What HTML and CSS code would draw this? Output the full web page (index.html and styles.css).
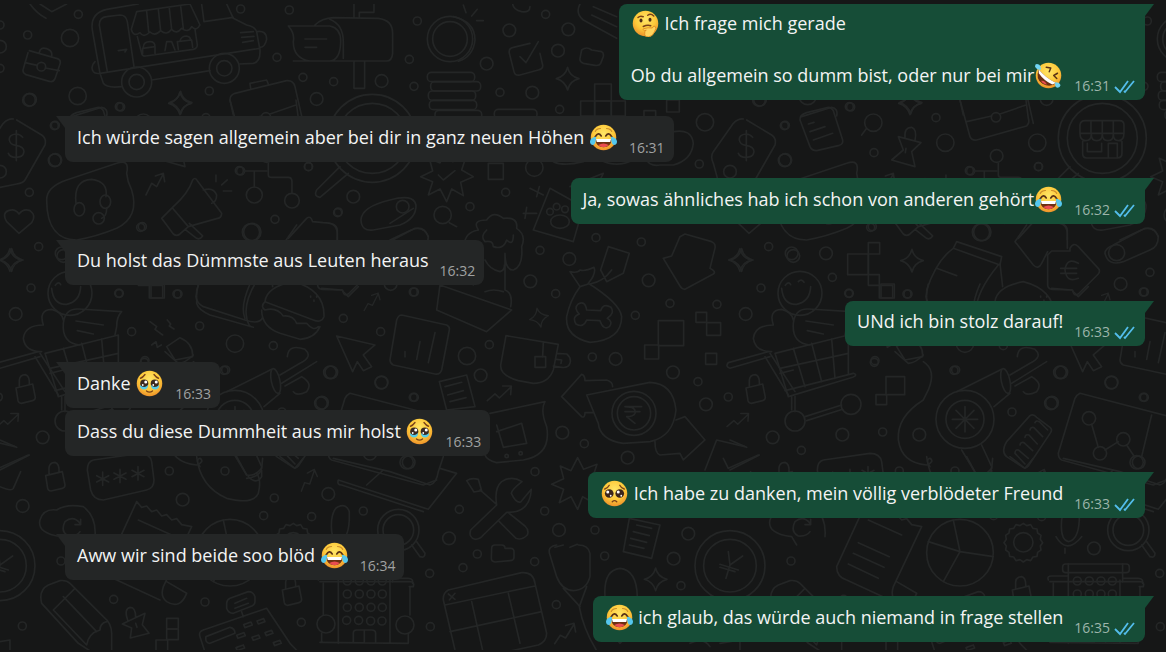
FILE: index.html
```html
<!DOCTYPE html>
<html lang="de">
<head>
<meta charset="utf-8">
<meta name="viewport" content="width=device-width, initial-scale=1">
<title>Chat</title>
<link rel="stylesheet" href="styles.css">
</head>
<body>
<svg class="sprites" aria-hidden="true">
  <defs>
    <radialGradient id="face" cx="50%" cy="35%" r="65%">
      <stop offset="0" stop-color="#ffe667"/><stop offset=".6" stop-color="#fdc93a"/><stop offset="1" stop-color="#ee922a"/>
    </radialGradient>
    <symbol id="e-joy" viewBox="0 0 36 36">
      <circle cx="18" cy="18" r="17" fill="url(#face)"/>
      <path d="M7 10Q9 6 14 6M22 6Q27 6 29 10" fill="none" stroke="#c98a2a" stroke-width="1.4" stroke-linecap="round"/>
      <path d="M7 17Q11 10 15 16M21 16Q25 10 29 17" fill="none" stroke="#5a3216" stroke-width="2.2" stroke-linecap="round"/>
      <path d="M7 20H29Q28 31 18 31T7 20Z" fill="#6d3012"/>
      <path d="M8 20H28L27 24H9Z" fill="#fff"/>
      <path d="M11 28Q18 24 25 28Q22 31 18 31T11 28Z" fill="#ea4d50"/>
      <path d="M8 17Q1 18 0 23Q0 28 4 28Q8 27 8 17ZM28 17Q35 18 36 23Q36 28 32 28Q28 27 28 17Z" fill="#55c7ee"/>
    </symbol>
    <symbol id="e-rofl" viewBox="0 0 36 36">
      <circle cx="18" cy="18" r="17" fill="url(#face)"/>
      <path d="M15 7L21 8L19 13M30 15L25 18L29 22" fill="none" stroke="#5a3216" stroke-width="2" stroke-linecap="round" stroke-linejoin="round"/>
      <path d="M5 10Q14 21 28 28Q20 35 10 29T5 10Z" fill="#6d3012"/>
      <path d="M5 10Q14 21 28 28L23 30Q12 25 5 15Z" fill="#fff"/>
      <path d="M8 25Q13 24 16 30Q11 30 8 25Z" fill="#ea4d50"/>
      <path d="M0 6Q0 2 4 3Q8 4 8 10Q2 11 0 6ZM27 27Q33 27 34 31Q33 35 29 34Q26 33 27 27Z" fill="#71d4f2"/>
    </symbol>
    <symbol id="e-think" viewBox="0 0 36 36">
      <circle cx="18" cy="18" r="17" fill="url(#face)"/>
      <path d="M8 10Q11 7 15 9M21 7Q25 4 29 8M15 22Q21 19 25 21" fill="none" stroke="#7a4219" stroke-width="2" stroke-linecap="round"/>
      <ellipse cx="12" cy="14" rx="2" ry="2.6" fill="#4c2c16"/><ellipse cx="24" cy="13" rx="2" ry="2.6" fill="#4c2c16"/>
      <path d="M15 25Q22 23 27 24Q29 20 31 22Q33 24 30 29Q28 35 22 36Q16 36 17 31Q16 28 19 27Q14 28 15 25Z" fill="#ffd45d" stroke="#e08c21" stroke-width="1.2"/>
    </symbol>
    <symbol id="e-tears" viewBox="0 0 36 36">
      <circle cx="18" cy="18" r="17" fill="url(#face)"/>
      <path d="M6 11Q9 10 12 6M24 6Q27 10 30 11M14 28Q18 31 22 28" fill="none" stroke="#7a4219" stroke-width="1.8" stroke-linecap="round"/>
      <circle cx="11" cy="18" r="5.4" fill="#3b2a21"/><circle cx="25" cy="18" r="5.4" fill="#3b2a21"/>
      <path d="M5 20Q11 25 16 20Q16 26 10 26Q5 25 5 20ZM31 20Q25 25 20 20Q20 26 26 26Q31 25 31 20Z" fill="#54cbe9"/>
      <circle cx="13" cy="16" r="2" fill="#fff"/><circle cx="27" cy="16" r="2" fill="#fff"/><circle cx="9" cy="20" r="1.2" fill="#fff"/><circle cx="23" cy="20" r="1.2" fill="#fff"/>
    </symbol>
    <symbol id="e-plead" viewBox="0 0 36 36">
      <circle cx="18" cy="18" r="17" fill="url(#face)"/>
      <path d="M5 12Q9 11 11 7M25 7Q27 11 31 12M15 29Q18 26 21 29" fill="none" stroke="#7a4219" stroke-width="1.8" stroke-linecap="round"/>
      <circle cx="11" cy="18" r="5.8" fill="#3b251b"/><circle cx="25" cy="18" r="5.8" fill="#3b251b"/>
      <circle cx="9" cy="16" r="2" fill="#fff"/><circle cx="23" cy="16" r="2" fill="#fff"/><circle cx="13" cy="21" r="1.2" fill="#fff"/><circle cx="27" cy="21" r="1.2" fill="#fff"/>
    </symbol>
    <symbol id="ticks" viewBox="0 0 22 15">
      <path d="M1 8L6 13L14 2M10 12L11 13L20 2" fill="none" stroke="#53bdeb" stroke-width="1.8"/>
    </symbol>
  </defs>
</svg>

<svg class="wallpaper" aria-hidden="true">
  <defs>
    <marker id="r12" markerUnits="userSpaceOnUse" markerWidth="40" markerHeight="40" viewBox="-20 -20 40 40"><circle class="ring" r="12"/></marker>
    <marker id="r19" markerUnits="userSpaceOnUse" markerWidth="60" markerHeight="60" viewBox="-30 -30 60 60"><circle class="ring" r="19"/></marker>
    <marker id="r26" markerUnits="userSpaceOnUse" markerWidth="70" markerHeight="70" viewBox="-35 -35 70 70"><circle class="ring" r="26"/></marker>
    <path id="spark" d="M0-34Q5-8 34 0Q6 7 0 34Q-7 8-34 0Q-7-7 0-34Z"/>
    <path id="lock" d="M-28-8L22-20L30 20Q30 28 22 30L-12 38Q-20 38-22 30ZM-18-12V-32Q-16-48 0-48Q14-44 12-18"/>
    <path id="zig" d="M-38 22L-15 2L-2 14L34-20M8-22L34-22L32 4"/>
    <path id="burst" d="M0-75L18-40L58-55L45-15L80 5L42 22L50 62L15 42L0 80L-20 42L-55 60L-42 20L-78 5L-42-12L-52-50L-20-36Z"/>
    <path id="pin" d="M-38 10L30-22L22 12L42 38L-14 52L-10 22ZM-22-2Q-34-36-14-40Q2-40 2-10M2 8L6 20"/>
    <g id="doodles">
      <g transform="scale(.3333)">
        <path class="dots-s" d="M235 43 83 105 362 321 628 273 722 27 868 30 831 172 909 232 1001 245 88 577 926 500 1015 636 166 376 0 75 0 205 722 513"/>
        <path class="dots-m" d="M90 299 950 297 1145 243 166 480 1060 590 0 140 0 515"/>
        <path class="dots-l" d="M210 114 233 288"/>
        <use href="#spark" x="542" y="308"/>
        <path d="M90 12Q110 40 138 55M120 12Q140 25 155 35L200 12M88 152L172 176Q184 180 180 192L165 236Q160 248 148 244L78 224Q66 218 70 206L84 158M118 158Q120 140 140 146Q158 152 155 168M75 188L112 196M136 204L178 212"/>
        <circle cx="124" cy="200" r="13"/>
        <path d="M300 220L277 90Q270 40 320 28L415 12M300 220L310 250Q320 265 365 260M455 240L630 212M718 192L760 190Q782 185 780 150L770 95Q765 80 740 75L700 55L680 12M300 220L780 145M322 215L298 75Q298 52 320 50L360 45Q378 45 382 65L402 200M355 152L380 148L375 156M410 35L570 12L600 75Q590 95 575 80Q565 100 545 85Q530 105 515 88Q500 108 482 92Q465 110 450 96Q430 115 420 98Q400 112 394 88ZM440 34L446 95M475 28L482 92M508 24L515 88M542 18L550 85M412 110L425 160Q427 170 437 168L580 148Q592 145 592 135L585 88M428 160V145L465 140V160M430 142Q430 125 450 125Q465 125 465 140M495 152L500 125L515 125L525 150M535 148L532 125L575 120L578 142M540 122Q545 108 560 108Q570 110 572 118M605 12L612 65L700 52M770 95Q800 90 800 118Q795 142 780 142M722 98L760 95M725 112L762 109M728 127L760 122M285 185Q270 200 280 215Q285 222 300 220"/>
        <circle cx="410" cy="246" r="45"/><circle cx="410" cy="246" r="23"/><circle cx="673" cy="205" r="45"/><circle cx="673" cy="205" r="23"/>
        <path d="M865 78L990 78Q1025 85 1022 130Q1020 180 990 183L930 183Q880 175 880 125Q885 100 865 78M945 75Q965 55 1000 53L1135 55Q1178 60 1178 100V160Q1176 183 1160 183H880M990 58Q1030 75 1030 125V175M915 117H980M915 142H950M1062 12V52M1078 50V37H1122V12M1062 185V265H1094V185"/>
        <path d="M700 345L690 300Q690 285 705 280L860 242Q880 240 885 260L910 370M752 265L750 250L800 240L805 252M215 350L305 322Q325 325 320 348"/>
        <path d="M40 357Q25 355 10 370L-50 455Q-60 470-50 490L-35 545Q-30 562 0 562L50 552Q70 550 75 540L135 435Q140 415 125 405L50 360M68 412Q60 402 48 402Q26 404 28 420Q30 434 48 436Q72 440 72 455Q70 472 48 472Q30 472 25 460M49 392V482"/>
        <path d="M140 600Q140 560 200 540L350 490Q390 475 380 520Q382 545 395 570Q420 650 350 685Q290 710 230 720C180 720 140 690 140 600ZM228 610Q220 540 275 538Q325 545 318 590M320 625Q320 650 305 655"/>
        <ellipse cx="238" cy="628" rx="16" ry="20"/><ellipse cx="316" cy="605" rx="16" ry="20"/><ellipse cx="296" cy="655" rx="17" ry="17"/>
        <path d="M438 585L455 550L470 560L490 522M466 528L490 520L494 545M485 655L520 620Q565 580 578 540Q585 530 592 542L665 640Q665 655 650 656L565 680L540 702Q530 710 520 702L485 655M518 625L565 680M555 688L590 715Q600 720 608 708L568 670M610 570Q640 560 650 585Q650 605 635 610M648 525V545M665 555L682 540M670 573H695"/>
        <path d="M736 513H800M805 490V525Q805 532 815 532H865Q876 532 876 545V580M763 515V560"/>
        <circle cx="763" cy="585" r="24"/><circle cx="876" cy="602" r="22"/>
        <circle cx="1117" cy="415" r="132"/><circle cx="1117" cy="415" r="105"/>
        <path d="M1020 500L950 570Q940 590 960 592L1045 520M1170 600Q1085 620 1083 660Q1085 695 1120 690L1200 675Q1250 655 1248 615Q1240 580 1170 600"/>
        <path d="M57 700L20 665Q5 640 25 632Q45 624 57 642Q70 624 90 632Q110 647 95 668Z"/>
      </g>
      <g transform="translate(390 0) scale(.3333)">
        <path class="dots-s" d="M82 63 58 178 72 259 467 43 330 277 509 328 347 577 240 620 928 492"/>
        <path class="dots-m" d="M290 191 358 91 535 88 504 152 427 278 1107 300 38 620"/>
        <path class="dots-l" d="M433 503 158 645 945 367"/>
        <circle cx="180" cy="117" r="68"/><circle cx="180" cy="117" r="52"/>
        <path d="M190 50Q255 65 255 120Q250 170 205 184M220 15L228 38M262 28L245 48M280 62H260M368 12Q370 30 395 35Q420 38 420 20M420 130L370 142Q355 145 358 160L372 215Q375 228 390 225L445 210Q460 207 458 195L450 160M390 170L408 188L445 125M575 150Q590 138 605 150L635 155Q642 158 640 170L632 190Q628 198 615 196L580 190Q568 185 570 175ZM570 12Q555 40 580 60L680 115M610 20L680 50M605 45L680 80"/>
        <rect x="112" y="217" width="142" height="28" rx="12"/><rect x="122" y="245" width="150" height="28" rx="12"/><rect x="115" y="273" width="142" height="28" rx="12"/><rect x="118" y="301" width="142" height="28" rx="12"/><rect x="135" y="331" width="140" height="28" rx="12"/><rect x="313" y="328" width="128" height="28" rx="12"/>
        <rect x="614" y="252" width="50" height="51"/><rect x="572" y="303" width="42" height="45"/><rect x="614" y="303" width="50" height="45"/><rect x="664" y="303" width="42" height="45"/><rect x="830" y="300" width="38" height="36"/><rect x="762" y="332" width="35" height="35"/><rect x="295" y="490" width="45" height="48"/>
        <use href="#spark" x="533" y="236"/><use href="#burst" x="170" y="525"/><path d="M145 525L160 540L195 512"/>
        <path d="M480 565L430 690L550 725L580 620ZM420 565L460 585M448 560L440 590M400 640L440 640M410 622L405 655"/>
        <ellipse cx="510" cy="665" rx="28" ry="20"/><circle cx="480" cy="635" r="10"/><circle cx="500" cy="620" r="10"/><circle cx="525" cy="628" r="10"/>
        <path d="M850 395Q905 385 910 430Q905 480 850 495H810Q780 500 770 480M490 485Q520 500 580 485M630 480Q680 505 730 480M540 560L640 520L620 560"/>
      </g>
      <g transform="translate(50 90) scale(.3333)">
        <path class="dots-s" d="M13 107 208 50 468 83 282 188 568 242 775 230 272 412 157 562 206 610 381 612 1110 547 1090 606"/>
        <path class="dots-m" d="M14 211 650 198 40 498 138 490 1022 582"/>
        <path class="dots-l" d="M280 98 496 158 772 158 603 427"/>
        <path d="M260 115L245 135M80 68L145 52Q155 52 160 62L188 150Q190 162 178 166L110 182Q95 182 90 170L60 90Q58 75 80 68M85 102L102 97M90 125L135 110M100 150L158 130M355 140L423 158L395 185L405 230L335 210L370 180ZM375 143Q372 112 395 112Q412 118 405 152M378 175L376 188"/>
        <use href="#spark" x="390" y="40"/><use href="#spark" x="396" y="512"/>
        <path d="M540 30L570 140Q575 152 590 150L740 108Q750 100 745 85L738 30M560 95L635 78M660 72L738 45"/><circle cx="648" cy="82" r="14"/>
        <path d="M900 130V105Q902 92 915 92H1018Q1032 92 1032 105V130ZM933 92V130M967 92V130M1000 92V130M900 130Q900 152 917 152Q934 152 934 132Q934 152 950 152Q967 152 967 132Q967 152 984 152Q1000 152 1000 132Q1000 152 1016 152Q1032 152 1032 130M908 155V190Q908 204 920 204H1012Q1026 204 1026 190V155M922 160V185H965V160M985 204V160H1012V204"/>
        <rect x="203" y="492" width="62" height="62"/><rect x="265" y="458" width="34" height="34"/><path d="M265 554V586H298V554ZM265 492V554H298"/><rect x="298" y="586" width="40" height="38"/>
        <path d="M530 455L665 500L660 525L520 475ZM520 475Q470 510 440 600L440 640Q445 660 480 675L610 712M470 535L530 557M655 525Q560 640 600 710M660 520L668 590M740 405L705 455L760 525Q775 540 785 520L803 485M850 405Q860 410 862 430V475M815 483H870V475Q880 455 895 470L955 535Q962 542 955 552L895 612Q880 620 878 600L815 598Q803 595 803 585V495ZM895 520Q860 500 855 540Q860 580 895 565M842 535H890M842 550H890M1000 465L1085 420Q1120 405 1135 440Q1135 470 1110 480L1030 515Q985 530 975 490Q975 475 1000 465"/><circle cx="1010" cy="488" r="24"/>
      </g>
      <g transform="translate(0 210) scale(.3333)">
        <path class="dots-s" d="M427 50 116 110 93 234 825 28 1013 8 358 250 534 252 599 348 395 365 820 407 1030 325 1142 365 677 480 435 452"/>
        <path class="dots-m" d="M47 312 994 487 1145 517 966 578 185 130"/>
        <path class="dots-l" d="M757 66 705 401"/>
        <use href="#spark" x="35" y="150"/><circle cx="210" cy="250" r="66"/>
        <path d="M155 235Q160 285 200 283Q240 275 242 230M166 226Q176 212 182 224M205 215Q214 205 222 217"/>
        <rect x="453" y="222" width="40" height="42"/>
        <path d="M795 275Q800 230 880 215Q975 240 972 320Q965 340 940 330ZM795 275Q780 290 795 300Q830 290 850 318Q880 315 890 340L920 340Q940 365 955 350M785 300Q785 350 840 370L900 388Q945 385 960 350M932 258V262M942 270V274M950 258V262M595 222L588 260Q590 280 610 290L735 330Q780 345 788 322M750 222Q720 290 735 325M965 235L1025 240L1045 260L1075 230"/>
        <use href="#zig" transform="translate(1115 275) rotate(-20) scale(.8)"/>
        <path d="M130 345Q115 300 155 298Q185 305 190 330M130 345Q75 345 70 385Q75 425 125 425M190 340Q195 295 235 297L365 305Q350 320 350 350L345 375M190 340Q185 400 240 405M228 333L310 345M232 362L280 372M105 440L175 555M120 430L195 545M150 490L190 480"/>
        <path d="M450 335L470 350L465 358L488 375M502 330L512 342L508 348L522 357M455 405L468 395L472 412L484 405M500 410L540 383Q580 400 578 440L525 450ZM1010 378L1125 405L1090 435L1115 470L1090 482L1072 455L1058 485Z"/>
        <use href="#lock" x="76" y="542"/><use href="#zig" transform="translate(25 630) scale(.9)"/>
        <path d="M865 85L920 25Q932 15 938 35L970 38Q1010 38 1012 60V90"/>
      </g>
      <g transform="translate(50 240) scale(.3333)">
        <path class="dots-s" d="M283 367 522 391 696 516 1090 472 308 576 64 631"/>
        <path class="dots-m" d="M840 397 994 428 813 490 187 584 418 584"/>
        <path d="M-15 340L205 285V400M-15 340L25 470L218 412Q235 405 220 400L15 452M40 325L75 440M95 310L125 425M155 297L165 415M0 385L205 340M35 470V510M45 470V515M75 530L185 495M80 542L188 508"/><circle cx="45" cy="543" r="30"/><circle cx="213" cy="493" r="30"/>
        <rect x="318" y="410" width="56" height="54"/><rect x="288" y="464" width="32" height="30"/>
        <path d="M345 335L385 370Q405 370 430 345M430 365Q470 390 445 450L430 480Q350 530 355 600Q365 670 440 675Q465 665 450 655Q435 660 450 680"/>
        <circle cx="555" cy="538" r="87"/><circle cx="555" cy="538" r="57"/><ellipse cx="677" cy="423" rx="13" ry="38" transform="rotate(-12 677 423)"/>
        <path d="M530 455L665 388M642 500L690 460M545 630L590 705M605 615L635 680Q635 710 590 715M690 405L750 370Q790 350 765 328Q715 310 712 350M695 430L800 365M705 438L755 410Q790 430 770 455Q740 470 730 455M555 500V576M517 538H593M528 511L582 565M582 511L528 565"/>
        <path d="M750 527Q760 520 770 532L810 562Q818 568 812 578L745 678Q736 688 726 680L680 650Q662 635 680 605ZM705 640L735 672M705 640Q705 628 715 630L745 655M720 615Q722 605 732 608L758 632M735 592Q737 582 747 585L772 612M750 570Q752 560 762 563L788 590M765 548Q768 540 778 545L803 570"/>
        <path d="M900 460L1210 540M900 460Q890 465 885 475L835 640Q835 655 845 660L1120 735L1160 720M1115 525L1085 650M935 553L955 622M975 630L1015 605M1040 615L1062 648"/><circle cx="927" cy="535" r="20"/><circle cx="960" cy="640" r="20"/><circle cx="1030" cy="598" r="20"/><circle cx="1070" cy="667" r="20"/>
      </g>
      <g transform="translate(390 210) scale(.3333)">
        <path class="dots-s" d="M450 121 497 251 618 83 754 96 840 280 736 316 981 283 73 246 298 404 73 562 607 441 924 515 1015 561"/>
        <path class="dots-m" d="M538 147 421 214 776 211 272 496 677 447 849 487 948 583"/>
        <path class="dots-l" d="M231 438"/>
        <path d="M178 38L200 50M265 60Q245 30 290 30Q310 0 340 25Q385 20 380 55Q410 75 395 110Q400 170 370 180Q345 180 345 130M265 60Q215 70 225 120L250 225M345 130V240Q370 250 362 290M290 60Q270 80 285 95Q310 90 310 110Q340 120 350 90Q370 110 370 75M285 150Q300 180 330 185Q345 180 343 165M285 245Q310 235 340 245M150 225L140 300L290 365L365 300ZM0 40L70 -5M0 90L75 55Q105 50 115 80"/>
        <path d="M35 315L170 345Q180 350 178 360L155 480Q150 495 135 492L10 465Q0 460 0 450L20 330Q25 315 35 315M45 425V440M90 395L80 448M135 368L115 458M348 377L505 403L490 480Q475 520 430 520L385 512Q325 495 333 460ZM460 398L458 440M500 430L530 432Q545 445 540 460Q535 475 515 472L490 468M500 448L515 450L513 460M148 515L230 495L255 590L170 600ZM165 530L215 517M173 555L220 542M180 575L228 563"/><rect x="435" y="440" width="32" height="32"/>
        <path d="M570 230Q560 215 540 185Q565 190 570 180Q585 185 612 172Q620 190 595 220Q690 280 695 320Q695 390 600 397Q525 380 530 320Q540 270 570 230M570 230L595 222M655 110L718 130L700 190L650 215L632 180ZM600 222Q640 215 665 180M590 300Q585 270 565 282Q550 295 568 312Q545 320 558 342Q580 355 590 330L630 332Q640 362 658 350Q670 335 652 325Q675 310 663 292Q640 278 632 302Z"/>
        <path d="M885 72L965 95Q978 100 975 115L960 175Q980 185 970 192L885 238Q875 238 870 228L820 145L845 138L870 80Z"/>
        <use href="#spark" x="1050" y="150"/><use href="#spark" transform="translate(447 323) rotate(-12) scale(.85)"/>
        <rect x="805" y="332" width="76" height="75"/><rect x="764" y="405" width="42" height="42"/><rect x="918" y="307" width="32" height="30"/><rect x="950" y="338" width="42" height="38"/><rect x="947" y="430" width="33" height="33"/>
        <path d="M1135 425L1015 458Q1005 470 1020 475L1140 440"/>
        <circle cx="732" cy="610" r="66"/><circle cx="732" cy="610" r="50"/>
        <path d="M590 555L780 517Q850 520 858 600Q850 680 780 695L700 700Q630 690 625 640ZM705 590H755M705 605H750M705 590Q740 590 735 610Q730 620 710 620L735 640M575 493L515 560L575 620Q585 625 585 608H610M575 493Q585 495 585 512L650 510Q668 515 668 530M858 630L885 620L945 690L880 750L870 730L810 735Q795 730 795 695M300 610L465 575Q450 600 470 650Q485 735 400 750L320 758Q290 750 285 735M320 665L395 640L410 700L340 712L320 645"/>
        <circle cx="350" cy="738" r="5"/><circle cx="392" cy="730" r="5"/>
        <use href="#zig" x="330" y="550"/>
      </g>
      <g transform="translate(0 430) scale(.3333)">
        <path class="dots-s" d="M508 123 675 123 823 204 791 257 935 260 1090 243 341 508 615 516 904 577 67 588 183 393"/>
        <path class="dots-m" d="M128 22 68 228 548 209 985 192"/>
        <path d="M0 30L50 52M0 120L88 75M62 125L40 175Q35 185 0 170"/>
        <use href="#lock" x="165" y="145"/><use href="#lock" x="875" y="488"/><use href="#pin" x="405" y="572"/>
        <path d="M280 90L420 70Q450 70 455 95L462 150Q462 175 440 180L310 210Q280 210 272 180L262 120Q262 95 280 90M308 126V166M290 137L326 156M326 137L290 156M360 118V158M342 129L378 148M378 129L342 148M414 110V150M396 121L432 140M432 121L396 140"/>
        <path d="M590 80Q600 170 680 205Q760 225 775 190Q785 150 770 130M710 80L740 135Q765 140 785 115L788 85M745 140Q770 165 785 140L785 120M840 80L885 115L910 85"/>
        <use href="#zig" transform="translate(925 150) rotate(-28) scale(.9)"/>
        <path d="M1000 85L1170 125L1290 165Q1310 160 1315 125L1330 80M1015 150L1285 238L1370 130L1320 115M1015 150Q1010 165 1025 165L1270 245M1100 165L1150 120"/>
        <path d="M200 345L185 320Q110 310 120 270Q130 235 170 240Q200 220 250 230Q290 260 285 320M240 280Q220 255 195 275Q180 305 205 318Q230 320 240 305M242 268V284H225"/>
        <path d="M410 215L320 410Q320 440 350 450L480 510M410 215L425 232L440 228L455 245L470 240L485 258L500 254L515 270L530 266L545 284L575 290L490 470Q480 500 500 515Q540 540 560 490L500 455M415 270L515 315"/>
        <path d="M385 338L478 380M370 370L462 412M355 402L445 445"/>
        <path d="M125 520Q115 480 145 465L180 452Q200 450 210 460L310 560Q335 580 335 610V666M125 520L235 640L275 666M160 540L225 475M160 540L260 645Q265 610 300 600Q300 580 320 575M190 500L290 605"/>
        <rect x="500" y="565" width="35" height="32"/><rect x="500" y="597" width="35" height="32"/><rect x="468" y="630" width="35" height="36"/>
        <path d="M690 505L745 485Q760 485 765 500V515Q765 525 750 530L700 550Q685 550 680 535V520Q680 510 690 505M705 520L740 505M705 535L745 520M725 545L730 560M610 600L800 535L870 640L895 666M610 600Q595 605 600 620L615 666M618 620L690 592Q705 595 705 610L630 640Q615 640 618 620"/>
        <path d="M731 584l22-8l4 9l-22 8ZM771 573l20-7l4 9l-20 7ZM710 616l22-8l4 9l-22 8ZM756 622l20-7l4 9l-20 7ZM795 608l20-7l4 9l-20 7ZM708 653l22-8l4 9l-22 8ZM820 638l20-7l4 9l-20 7Z"/>
        <path d="M960 455H1230Q1245 455 1240 470H1228M970 460V555M1015 455V640M1170 450V640M960 637L1225 640V610M965 610V637M1060 635V610Q1060 600 1070 600H1115Q1127 600 1127 610V635M1093 600V635M1230 470V555"/><circle cx="978" cy="582" r="27"/><circle cx="1215" cy="585" r="27"/>
        <path d="M1015 455V402M1178 455V402M955 450Q950 438 965 438H1012M1180 445H1225Q1240 445 1238 460"/><rect x="998" y="402" width="200" height="26" rx="9"/>
        <path class="dots-s" d="M1042 453 1078 453 1113 453 1147 453 1042 492 1078 492 1113 492 1147 492 1042 532 1078 532 1113 532 1147 532 1040 571 1076 571 1112 573 1146 573"/>
      </g>
      <g transform="translate(390 430) scale(.3333)">
        <path class="dots-s" d="M435 125 208 238 464 243 262 372 219 413 119 430 434 395 615 300 499 524 121 590 644 378 583 41 873 467"/>
        <path class="dots-m" d="M56 97 177 325 507 300 713 83 895 311 851 386 517 8"/>
        <use href="#burst" x="563" y="158"/><use href="#spark" x="797" y="448"/>
        <path d="M230 152Q245 142 265 148L275 182L252 186ZM270 180L318 222M396 155Q365 135 335 155Q312 175 320 225L242 300Q235 322 255 328Q270 328 280 315L350 247Q420 250 424 178L392 216Q378 220 364 190Q364 180 396 155M328 275L378 325Q395 332 412 315Q418 300 405 288L355 248"/>
        <path d="M305 355Q305 345 315 345H335Q345 345 345 355H362Q373 355 372 368V382Q372 392 360 392L315 396Q304 395 304 385ZM175 480L395 428Q430 425 435 460L470 610Q470 635 445 645L235 690Q205 690 195 660L160 510Q158 490 175 480M165 525L435 468M180 605L455 545M245 515L280 670M355 490L390 640M175 492L195 508M195 490L178 510"/>
        <path d="M500 345Q470 350 480 375L500 440Q515 480 550 482Q590 480 600 440V370Q595 345 565 345M495 352L520 345M540 352L562 343M520 475L570 530M590 470L568 530Q580 600 625 670M645 500Q640 420 690 415Q740 420 742 500Q735 600 690 640Q650 600 645 500"/>
        <path d="M718 265L810 285L785 385L700 365ZM740 285L785 295M730 305L778 317M722 325L770 337M718 345L762 355"/>
        <circle cx="1020" cy="407" r="105"/><circle cx="1020" cy="407" r="79"/>
        <path d="M1015 365L1020 405L1058 378M1020 405L1008 445M990 403L1045 420M990 412L1035 425M945 120L980 30L1065 50M1000 85L1015 115L1105 75"/>
        <circle cx="25" cy="300" r="62"/><circle cx="25" cy="300" r="46"/><path d="M65 345L90 380Q105 385 105 370L80 335"/>
        <use href="#zig" transform="translate(525 610) rotate(-15)"/>
        <path d="M900 640Q940 620 960 650M990 640L1050 630V666"/>
      </g>
      <g transform="translate(50 440) scale(.3333)">
        <path class="dots-m" d="M942 325"/>
        <circle cx="540" cy="338" r="100"/><circle cx="730" cy="307" r="29"/>
        <path d="M730 250l10 7l12-3l7 11l12 2l2 12l10 7l-2 12l7 10l-7 10l2 12l-10 7l-2 12l-12 2l-7 11l-12-3l-10 7l-10-7l-12 3l-7-11l-12-2l-2-12l-10-7l2-12l-7-10l7-10l-2-12l10-7l2-12l12-2l7-11l12 3Z"/>
        <path d="M540 335L520 240M540 335L640 350M540 335L490 425M540 335L445 305M845 240Q840 300 865 305Q895 300 898 240V215Q890 190 865 200Q850 205 845 240M828 290Q860 345 905 290M855 325V340"/>
      </g>
    </g>
  </defs>
  <use href="#doodles" x="-730"/><use href="#doodles"/><use href="#doodles" x="730"/><use href="#doodles" x="1460"/>
</svg>

<main class="chat">
  <article class="msg msg-out msg-tail msg-first">
    <p class="text"><svg class="emoji" role="img" aria-label="🤔"><use href="#e-think"/></svg> Ich frage mich gerade<br><br>Ob du allgemein so dumm bist, oder nur bei mir<svg class="emoji" role="img" aria-label="🤣"><use href="#e-rofl"/></svg></p>
    <div class="meta"><time>16:31</time><svg class="ticks" role="img" aria-label="Gelesen"><use href="#ticks"/></svg></div>
  </article>
  <article class="msg msg-in msg-tail">
    <p class="text">Ich würde sagen allgemein aber bei dir in ganz neuen Höhen <svg class="emoji" role="img" aria-label="😂"><use href="#e-joy"/></svg></p>
    <div class="meta"><time>16:31</time></div>
  </article>
  <article class="msg msg-out msg-tail">
    <p class="text">Ja, sowas ähnliches hab ich schon von anderen gehört<svg class="emoji" role="img" aria-label="😂"><use href="#e-joy"/></svg></p>
    <div class="meta"><time>16:32</time><svg class="ticks" role="img" aria-label="Gelesen"><use href="#ticks"/></svg></div>
  </article>
  <article class="msg msg-in msg-tail msg-plain">
    <p class="text">Du holst das Dümmste aus Leuten heraus</p>
    <div class="meta"><time>16:32</time></div>
  </article>
  <article class="msg msg-out msg-tail msg-plain">
    <p class="text">UNd ich bin stolz darauf!</p>
    <div class="meta"><time>16:33</time><svg class="ticks" role="img" aria-label="Gelesen"><use href="#ticks"/></svg></div>
  </article>
  <article class="msg msg-in msg-tail">
    <p class="text">Danke <svg class="emoji" role="img" aria-label="🥹"><use href="#e-tears"/></svg></p>
    <div class="meta"><time>16:33</time></div>
  </article>
  <article class="msg msg-in msg-follow">
    <p class="text">Dass du diese Dummheit aus mir holst <svg class="emoji" role="img" aria-label="🥹"><use href="#e-tears"/></svg></p>
    <div class="meta"><time>16:33</time></div>
  </article>
  <article class="msg msg-out msg-tail">
    <p class="text"><svg class="emoji" role="img" aria-label="🥺"><use href="#e-plead"/></svg> Ich habe zu danken, mein völlig verblödeter Freund</p>
    <div class="meta"><time>16:33</time><svg class="ticks" role="img" aria-label="Gelesen"><use href="#ticks"/></svg></div>
  </article>
  <article class="msg msg-in msg-tail">
    <p class="text">Aww wir sind beide soo blöd <svg class="emoji" role="img" aria-label="😂"><use href="#e-joy"/></svg></p>
    <div class="meta"><time>16:34</time></div>
  </article>
  <article class="msg msg-out msg-tail">
    <p class="text"><svg class="emoji" role="img" aria-label="😂"><use href="#e-joy"/></svg> ich glaub, das würde auch niemand in frage stellen</p>
    <div class="meta"><time>16:35</time><svg class="ticks" role="img" aria-label="Gelesen"><use href="#ticks"/></svg></div>
  </article>
</main>
</body>
</html>
```
FILE: styles.css
```css
* { box-sizing: border-box; }

body {
  margin: 0;
  min-height: 100vh;
  position: relative;
  background: #161717;
  color: #f3f4f4;
  font-family: "Open Sans", "Noto Sans", sans-serif;
}

.sprites {
  position: absolute;
  width: 0;
  height: 0;
}

.wallpaper {
  position: absolute;
  inset: 0;
  width: 100%;
  height: 100%;
  clip-path: inset(4px 0 2px);
  fill: none;
  stroke: #242626;
  stroke-width: 5px;
  stroke-linecap: round;
  stroke-linejoin: round;
}

.ring {
  fill: none;
  stroke: #242626;
  stroke-width: 5px;
}

.dots-s,
.dots-m,
.dots-l { stroke: none; }
.dots-s { marker: url(#r12); }
.dots-m { marker: url(#r19); }
.dots-l { marker: url(#r26); }

.chat {
  position: relative;
  display: flex;
  flex-direction: column;
  gap: 16px;
  padding: 4px 21px 10px 65px;
}

.msg {
  position: relative;
  display: flex;
  align-items: flex-end;
  gap: 11px;
  padding: 8px 9px 12px 12px;
  border-radius: 8px;
}

.msg-in {
  align-self: flex-start;
  background: #242626;
}

.msg-out {
  align-self: flex-end;
  background: #164d37;
}

.msg-first { padding-top: 6px; }
.msg-follow { margin-top: -14px; }

.msg-in.msg-tail { border-top-left-radius: 0; }
.msg-out.msg-tail { border-top-right-radius: 0; }

.msg-tail::before {
  content: "";
  position: absolute;
  top: 0;
  width: 9px;
  height: 12px;
  background: inherit;
}

.msg-in.msg-tail::before {
  right: 100%;
  clip-path: polygon(0 0, 100% 0, 100% 100%);
}

.msg-out.msg-tail::before {
  left: 100%;
  clip-path: polygon(0 0, 100% 0, 0 100%);
}

.text {
  margin: 0;
  font-size: 18px;
  line-height: 26px;
}

.msg-plain .text { line-height: 25px; }

.emoji {
  width: 27px;
  height: 27px;
  margin: -4px 1px;
  vertical-align: -3px;
}

.meta {
  display: flex;
  align-items: center;
  gap: 4px;
  margin-bottom: -7px;
  font-size: 14px;
  line-height: 18px;
  color: #a0a2a2;
}

.msg-out .meta { color: #9db5ab; }

.ticks {
  width: 22px;
  height: 15px;
}
```
